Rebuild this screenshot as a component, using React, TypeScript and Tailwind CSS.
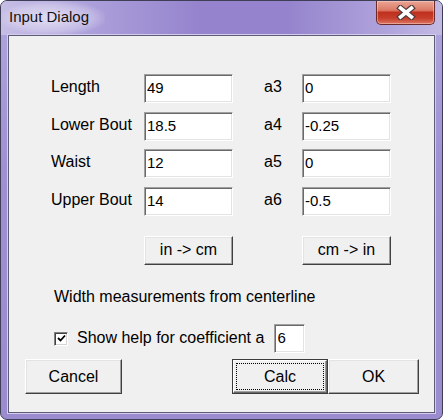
import React from "react";

const font = { fontFamily: '"Liberation Sans", Arial, sans-serif' };

interface Field {
  label: string;
  value: string;
  coef: string;
  coefValue: string;
}

const fields: Field[] = [
  { label: "Length", value: "49", coef: "a3", coefValue: "0" },
  { label: "Lower Bout", value: "18.5", coef: "a4", coefValue: "-0.25" },
  { label: "Waist", value: "12", coef: "a5", coefValue: "0" },
  { label: "Upper Bout", value: "14", coef: "a6", coefValue: "-0.5" },
];

function TextBox({ value, className }: { value: string; className: string }) {
  return (
    <div
      className={
        "bg-white border border-t-[#a0a0a0] border-l-[#a0a0a0] border-b-white border-r-white shadow-[inset_1px_1px_0_#696969,inset_-1px_-1px_0_#e3e3e3] flex items-center pl-[2px] text-[15px] text-black " +
        className
      }
    >
      {value}
    </div>
  );
}

function Button({
  children,
  className,
  isDefault,
}: {
  children: React.ReactNode;
  className: string;
  isDefault?: boolean;
}) {
  if (isDefault) {
    return (
      <div className={"border border-[#3c3c3c] bg-[#f0f0f0] " + className}>
        <div className="w-full h-full border border-t-white border-l-white border-b-[#696969] border-r-[#696969] shadow-[inset_-1px_-1px_0_#a0a0a0] p-[2px]">
          <div className="w-full h-full border border-dotted border-black flex items-center justify-center text-[16px] text-black">
            {children}
          </div>
        </div>
      </div>
    );
  }
  return (
    <div
      className={
        "bg-[#f0f0f0] border border-t-white border-l-white border-b-[#404040] border-r-[#404040] shadow-[inset_-1px_-1px_0_#a0a0a0,inset_1px_1px_0_#e3e3e3] flex items-center justify-center text-[16px] text-black " +
        className
      }
    >
      {children}
    </div>
  );
}

function CloseButton() {
  return (
    <div className="w-[59px] h-[24px] rounded-b-[5px] border border-t-0 border-[#6b2b2b] bg-[linear-gradient(to_bottom,#e9a596_0%,#dc7a66_40%,#c0301e_50%,#c63f2c_75%,#dd7660_100%)] shadow-[inset_0_0_0_1px_rgba(255,220,210,0.45)] flex items-center justify-center">
      <svg width="20" height="15" viewBox="0 0 20 15">
        <path d="M4.5 3 L15.5 12 M15.5 3 L4.5 12" stroke="#4e3a3a" strokeWidth="6" strokeLinecap="square" />
        <path d="M4.5 3 L15.5 12 M15.5 3 L4.5 12" stroke="#ffffff" strokeWidth="3.6" strokeLinecap="square" />
      </svg>
    </div>
  );
}

export default function App() {
  return (
    <div className="w-[443px] h-[420px] bg-white" style={font}>
      <div className="w-full h-full rounded-[7px] border border-[#3e3e56] bg-[linear-gradient(to_bottom,#b1a6de_0%,#9f90d3_40%,#9a8ccf_100%)] flex flex-col overflow-hidden">
        <div className="h-[34px] flex justify-between items-start bg-[linear-gradient(to_right,#c6bee5_0%,#aea2dc_18%,#9584cd_45%,#9584cd_65%,#b0a4dc_88%,#c3bae3_100%)]">
          <div className="h-full flex items-center pl-[8px] pb-[2px] text-[15px] text-[#111] bg-[radial-gradient(ellipse_at_center,rgba(255,255,255,0.6)_0%,rgba(255,255,255,0.25)_55%,rgba(255,255,255,0)_75%)] pr-[16px]">
            Input Dialog
          </div>
          <div className="mr-[7px]">
            <CloseButton />
          </div>
        </div>
        <div className="mx-[7px] mb-[6px] flex-1 border border-[#5c5c74] bg-[#f0f0f0] shadow-[0_0_0_1px_#d4ccee] flex flex-col">
          <div className="pt-[38px] pl-[42px] flex flex-col">
            <div className="grid grid-cols-[93px_89px_69px_89px] gap-y-[8.5px]">
              {fields.map((f) => (
                <React.Fragment key={f.label}>
                  <div className="h-[29px] flex items-center pb-[3px] text-[16px] text-black">
                    {f.label}
                  </div>
                  <TextBox value={f.value} className="h-[29px]" />
                  <div className="h-[29px] flex items-center pl-[31px] pb-[3px] text-[16px] text-black">
                    {f.coef}
                  </div>
                  <TextBox value={f.coefValue} className="h-[29px]" />
                </React.Fragment>
              ))}
            </div>
            <div className="flex mt-[20.5px] pl-[93px]">
              <Button className="w-[89px] h-[29px] pb-[2px]">in -&gt; cm</Button>
              <Button className="w-[89px] h-[29px] ml-[69px] pb-[2px]">cm -&gt; in</Button>
            </div>
            <div className="mt-[22px] h-[20px] pl-[3px] flex items-center text-[16px] text-black">
              Width measurements from centerline
            </div>
            <div className="mt-[17px] h-[29px] pl-[3px] flex items-center">
              <div className="w-[14px] h-[14px] bg-white border border-t-[#808080] border-l-[#808080] border-b-white border-r-white shadow-[inset_1px_1px_0_#404040,inset_-1px_-1px_0_#d4d4d4] flex items-center justify-center">
                <svg width="9" height="9" viewBox="0 0 9 9">
                  <path d="M1 4 L3.5 6.5 L8 1.5" stroke="#000" strokeWidth="1.8" fill="none" />
                </svg>
              </div>
              <span className="ml-[9px] text-[16px] text-black pb-[2px]">Show help for coefficient a</span>
              <TextBox value="6" className="ml-[10px] w-[31px] h-[29px]" />
            </div>
          </div>
          <div className="mt-[6px] pl-[16px] flex">
            <Button className="w-[97px] h-[35px]">Cancel</Button>
            <Button isDefault className="ml-[110px] w-[96px] h-[35px]">Calc</Button>
            <Button className="w-[91px] h-[35px]">OK</Button>
          </div>
        </div>
      </div>
    </div>
  );
}
